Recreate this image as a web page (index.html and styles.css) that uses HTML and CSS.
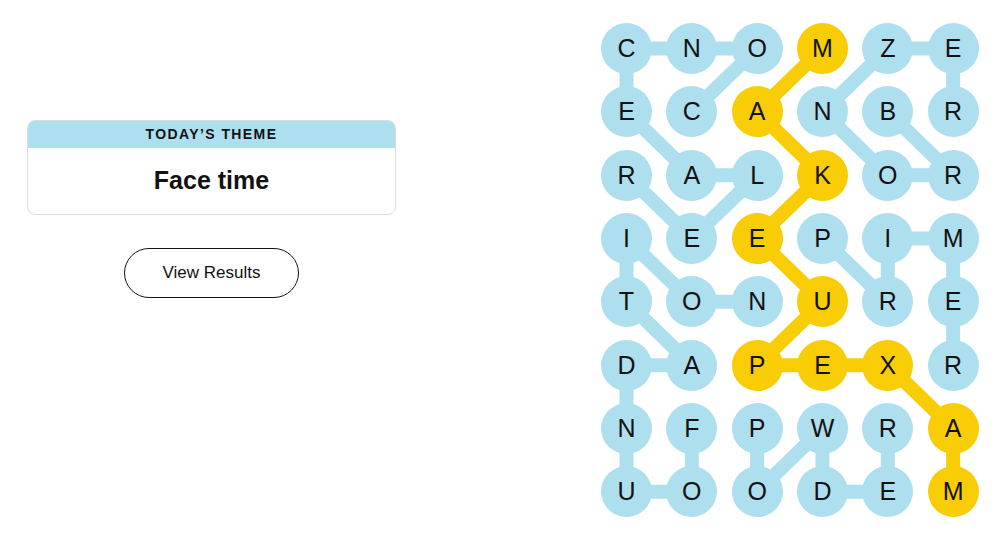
FILE: index.html
```html
<!DOCTYPE html>
<html lang="en">
<head>
<meta charset="utf-8">
<title>Strands</title>
<link rel="stylesheet" href="styles.css">
</head>
<body>
<main class="page">
  <section class="side">
    <div class="theme-card">
      <div class="theme-head">TODAY’S THEME</div>
      <div class="theme-body">Face time</div>
    </div>
    <button class="results-btn" type="button">View Results</button>
  </section>

  <section class="board">
    <svg class="links" viewBox="0 0 377.67 494.33" width="377.67" height="494.33" aria-hidden="true">
      <g fill="none" stroke="#aedfee" stroke-width="14" stroke-linecap="round" stroke-linejoin="round">
        <polyline points="90.83,88.83 156.17,25.5 90.83,25.5 25.5,25.5 25.5,88.83 90.83,152.17 156.17,152.17 90.83,215.5 25.5,152.17"/>
        <polyline points="286.83,88.83 352.17,152.17 286.83,152.17 221.5,88.83 286.83,25.5 352.17,25.5 352.17,88.83"/>
        <polyline points="221.5,215.5 286.83,278.83 286.83,215.5 352.17,215.5 352.17,278.83 352.17,342.17"/>
        <polyline points="90.83,405.5 90.83,468.83 25.5,468.83 25.5,405.5 25.5,342.17 90.83,342.17 25.5,278.83 25.5,215.5 90.83,278.83 156.17,278.83"/>
        <polyline points="156.17,405.5 156.17,468.83 221.5,405.5 221.5,468.83 286.83,468.83 286.83,405.5"/>
      </g>
      <polyline fill="none" stroke="#f8cd05" stroke-width="14" stroke-linecap="round" stroke-linejoin="round"
        points="221.5,25.5 156.17,88.83 221.5,152.17 156.17,215.5 221.5,278.83 156.17,342.17 221.5,342.17 286.83,342.17 352.17,405.5 352.17,468.83"/>
    </svg>
    <div class="grid">
      <span class="cell">C</span><span class="cell">N</span><span class="cell">O</span><span class="cell on">M</span><span class="cell">Z</span><span class="cell">E</span>
      <span class="cell">E</span><span class="cell">C</span><span class="cell on">A</span><span class="cell">N</span><span class="cell">B</span><span class="cell">R</span>
      <span class="cell">R</span><span class="cell">A</span><span class="cell">L</span><span class="cell on">K</span><span class="cell">O</span><span class="cell">R</span>
      <span class="cell">I</span><span class="cell">E</span><span class="cell on">E</span><span class="cell">P</span><span class="cell">I</span><span class="cell">M</span>
      <span class="cell">T</span><span class="cell">O</span><span class="cell">N</span><span class="cell on">U</span><span class="cell">R</span><span class="cell">E</span>
      <span class="cell">D</span><span class="cell">A</span><span class="cell on">P</span><span class="cell on">E</span><span class="cell on">X</span><span class="cell">R</span>
      <span class="cell">N</span><span class="cell">F</span><span class="cell">P</span><span class="cell">W</span><span class="cell">R</span><span class="cell on">A</span>
      <span class="cell">U</span><span class="cell">O</span><span class="cell">O</span><span class="cell">D</span><span class="cell">E</span><span class="cell on">M</span>
    </div>
  </section>
</main>
</body>
</html>
```

FILE: styles.css
```css
* {
  box-sizing: border-box;
}

html, body {
  margin: 0;
  padding: 0;
  background: #ffffff;
}

body {
  font-family: "Liberation Sans", Arial, sans-serif;
  color: #121212;
  width: 1000px;
  height: 539px;
  overflow: hidden;
}

.page {
  display: flex;
  align-items: flex-start;
}

.side {
  width: 369px;
  margin-left: 27px;
  margin-top: 120px;
  display: flex;
  flex-direction: column;
  align-items: center;
}

.theme-card {
  width: 100%;
  border: 1px solid #dcdcdc;
  border-radius: 8px;
  overflow: hidden;
}

.theme-head {
  background: #aedfee;
  height: 28px;
  margin: -1px -1px 0;
  display: flex;
  align-items: center;
  justify-content: center;
  font-size: 14px;
  font-weight: 700;
  letter-spacing: 1.4px;
  color: #121212;
}

.theme-body {
  height: 66px;
  display: flex;
  align-items: center;
  justify-content: center;
  font-size: 25px;
  font-weight: 700;
  color: #121212;
  padding-bottom: 2px;
}

.results-btn {
  margin-top: 33px;
  width: 175px;
  height: 50px;
  border: 1px solid #121212;
  border-radius: 25px;
  background: #ffffff;
  font-family: "Liberation Sans", Arial, sans-serif;
  font-size: 17px;
  color: #121212;
  padding: 0;
}

.board {
  position: relative;
  margin-left: 205px;
  margin-top: 23px;
  width: 377.67px;
  height: 494.33px;
}

.links {
  position: absolute;
  left: 0;
  top: 0;
  z-index: 0;
}

.grid {
  position: relative;
  z-index: 1;
  display: grid;
  grid-template-columns: repeat(6, 51px);
  grid-auto-rows: 51px;
  column-gap: 14.33px;
  row-gap: 12.33px;
}

.cell {
  width: 51px;
  height: 51px;
  border-radius: 50%;
  background: #aedfee;
  display: flex;
  align-items: center;
  justify-content: center;
  font-size: 25px;
  color: #121212;
  line-height: 1;
}

.cell.on {
  background: #f8cd05;
}
```
